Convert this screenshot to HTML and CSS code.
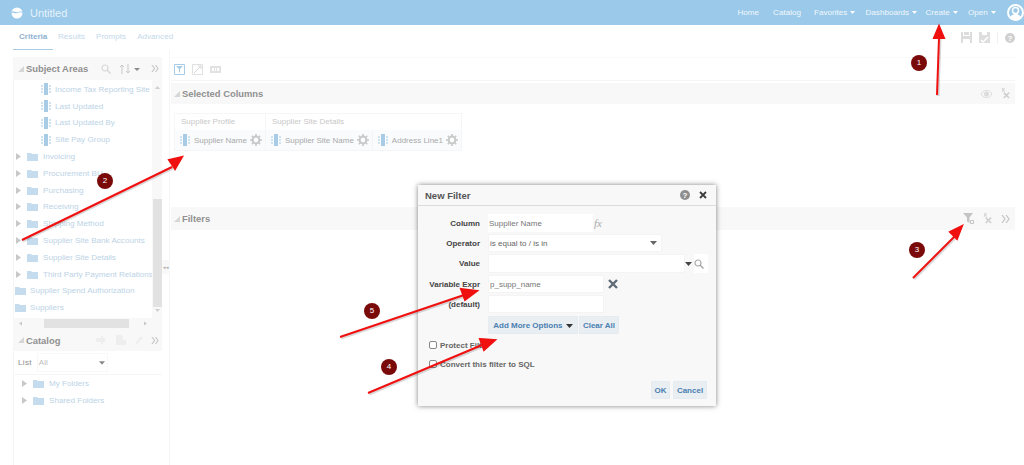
FILE: index.html
```html
<!DOCTYPE html>
<html lang="en">
<head>
    <meta charset="UTF-8">
    <title>Untitled</title>
    <link rel="stylesheet" href="styles.css">
</head>
<body>
<svg class="defs" width="0" height="0">
    <symbol id="folder" viewBox="0 0 11 9"><path d="M0 1h4l1 1h6v7H0z" fill="#c4dcee"/></symbol>
    <symbol id="field" viewBox="0 0 10 12"><path d="M3 0h4v12H3z" fill="#a8cbe6"/><path d="M0 2h2v2H0zM0 5h2v2H0zM0 8h2v2H0zM8 2h2v2H8zM8 5h2v2H8zM8 8h2v2H8z" fill="#cfe2f0"/></symbol>
    <symbol id="gear" viewBox="0 0 12 12"><circle cx="6" cy="6" r="3.400" fill="none" stroke="#c8c8c8" stroke-width="2"/><path d="M6 0v2M6 10v2M0 6h2M10 6h2M1.800 1.800l1.400 1.400M8.800 8.800l1.400 1.400M1.800 10.200l1.400-1.400M8.800 3.200l1.400-1.400" stroke="#c8c8c8" stroke-width="1.600"/></symbol>
    <symbol id="caret" viewBox="0 0 5 7"><path d="M0 0l5 3.500L0 7z" fill="#c8c8c8"/></symbol>
    <symbol id="down" viewBox="0 0 7 4"><path d="M0 0h7L3.500 4z" fill="currentColor"/></symbol>
    <symbol id="chevrons" viewBox="0 0 9 8"><path d="M1 0l3 4-3 4M5 0l3 4-3 4" fill="none" stroke="#c4c4c4" stroke-width="1.200"/></symbol>
    <symbol id="corner" viewBox="0 0 6 6"><path d="M6 0v6H0z" fill="#d6d6d6"/></symbol>
    <symbol id="clearx" viewBox="0 0 10 12"><path d="M1 0l3 4M4 0L1 4" stroke="#d4d4d4" stroke-width="1.200"/><path d="M3 5l6 6M9 5l-6 6" stroke="#cfcfcf" stroke-width="1.800"/></symbol>
    <symbol id="filter" viewBox="0 0 11 11"><path d="M0 0h10L6.500 4.500V10L4 8.500v-4z" fill="#c4c4c4"/><path d="M7.500 7.500h3v3h-3z" fill="none" stroke="#c4c4c4"/></symbol>
    <symbol id="disk" viewBox="0 0 11 11"><path d="M0 0h11v11H0z" fill="#dcdcdc"/><path d="M2 0h1v3h5V0h1v4H2zM2 7h7v4H2z" fill="#fff"/></symbol>
    <symbol id="diskcheck" viewBox="0 0 11 11"><path d="M0 0h11v11H0z" fill="#dedede"/><path d="M3 0h5v3H3z" fill="#fff"/><path d="M2 8l2 2 5-5" fill="none" stroke="#fff" stroke-width="1.500"/></symbol>
</svg>

<header class="topbar">
    <svg class="logo" width="12" height="12" viewBox="0 0 12 12"><circle cx="6" cy="6" r="5.500" fill="#fff"/><path d="M.3 6.500C2 4.500 3.500 7 6 6.300s3.500-1.800 5.700.2L11.700 5 11 4.800C9 3.800 8 5 6 5.300S2.500 3.500 1 4.800z" fill="#9ac9e9"/></svg>
    <span class="doc-title">Untitled</span>
    <nav class="topnav">
        <a class="nav-home">Home</a>
        <a class="nav-catalog">Catalog</a>
        <a>Favorites <svg width="5" height="3"><use href="#down"/></svg></a>
        <a class="nav-dash">Dashboards <svg width="5" height="3"><use href="#down"/></svg></a>
        <a>Create <svg width="5" height="3"><use href="#down"/></svg></a>
        <a>Open <svg width="5" height="3"><use href="#down"/></svg></a>
    </nav>
    <svg class="avatar" width="17" height="17" viewBox="0 0 17 17"><circle cx="8.500" cy="8.500" r="7.500" fill="#9ac9e9" stroke="#fff" stroke-width="2"/><circle cx="8.500" cy="6.500" r="3" fill="none" stroke="#fff" stroke-width="1.500"/><path d="M3 14c1-3 3-4 5.500-4s4.500 1 5.500 4l-2.500 2h-6z" fill="#fff"/></svg>
</header>

<div class="tabbar">
    <a class="tab active">Criteria</a>
    <a class="tab">Results</a>
    <a class="tab">Prompts</a>
    <a class="tab">Advanced</a>
    <div class="tab-tools">
        <svg width="11" height="11"><use href="#disk"/></svg>
        <svg width="11" height="11"><use href="#diskcheck"/></svg>
        <span class="tool-sep"></span>
        <svg width="10" height="10" viewBox="0 0 10 10"><circle cx="5" cy="5" r="5" fill="#d0d0d0"/><text x="5" y="8" class="help-mark">?</text></svg>
    </div>
</div>

<div class="workspace">
    <aside class="sidebar">
        <div class="panel-head subject-head">
            <svg class="twist" width="6" height="6"><use href="#corner"/></svg>
            <h3>Subject Areas</h3>
            <svg class="head-search" width="10" height="10" viewBox="0 0 10 10"><circle cx="4" cy="4" r="3" fill="none" stroke="#d6d6d6" stroke-width="1.200"/><path d="M6 6l3.500 3.500" stroke="#d6d6d6" stroke-width="1.500"/></svg>
            <svg class="head-sort" width="21" height="10" viewBox="0 0 21 10"><path d="M3 10V1M1 3l2-2 2 2M9 0v9M7 7l2 2 2-2" fill="none" stroke="#c8c8c8"/><path d="M15 4h6l-3 3z" fill="#8c8c8c"/></svg>
            <svg class="head-more" width="8" height="7"><use href="#chevrons"/></svg>
        </div>
        <div class="tree-wrap">
            <ul class="tree">
                <li class="row field"><svg width="10" height="12"><use href="#field"/></svg>Income Tax Reporting Site</li>
                <li class="row field"><svg width="10" height="12"><use href="#field"/></svg>Last Updated</li>
                <li class="row field"><svg width="10" height="12"><use href="#field"/></svg>Last Updated By</li>
                <li class="row field"><svg width="10" height="12"><use href="#field"/></svg>Site Pay Group</li>
                <li class="row"><svg class="cr" width="5" height="7"><use href="#caret"/></svg><svg width="11" height="9"><use href="#folder"/></svg>Invoicing</li>
                <li class="row"><svg class="cr" width="5" height="7"><use href="#caret"/></svg><svg width="11" height="9"><use href="#folder"/></svg>Procurement BU</li>
                <li class="row"><svg class="cr" width="5" height="7"><use href="#caret"/></svg><svg width="11" height="9"><use href="#folder"/></svg>Purchasing</li>
                <li class="row"><svg class="cr" width="5" height="7"><use href="#caret"/></svg><svg width="11" height="9"><use href="#folder"/></svg>Receiving</li>
                <li class="row"><svg class="cr" width="5" height="7"><use href="#caret"/></svg><svg width="11" height="9"><use href="#folder"/></svg>Shipping Method</li>
                <li class="row"><svg class="cr" width="5" height="7"><use href="#caret"/></svg><svg width="11" height="9"><use href="#folder"/></svg>Supplier Site Bank Accounts</li>
                <li class="row"><svg class="cr" width="5" height="7"><use href="#caret"/></svg><svg width="11" height="9"><use href="#folder"/></svg>Supplier Site Details</li>
                <li class="row"><svg class="cr" width="5" height="7"><use href="#caret"/></svg><svg width="11" height="9"><use href="#folder"/></svg>Third Party Payment Relations</li>
                <li class="row top"><svg width="11" height="9"><use href="#folder"/></svg>Supplier Spend Authorization</li>
                <li class="row top"><svg width="11" height="9"><use href="#folder"/></svg>Suppliers</li>
            </ul>
            <div class="vscroll">
                <svg class="arrow-up" width="5" height="3"><use href="#down"/></svg>
                <div class="vthumb"></div>
                <svg width="5" height="3"><use href="#down"/></svg>
            </div>
        </div>
        <div class="hscroll">
            <svg width="3" height="5"><use href="#caret"/></svg>
            <div class="hthumb"></div>
            <svg width="3" height="5"><use href="#caret"/></svg>
        </div>
        <div class="panel-head catalog-head">
            <svg class="twist" width="6" height="6"><use href="#corner"/></svg>
            <h3>Catalog</h3>
            <svg class="cat-tools" width="48" height="10" viewBox="0 0 48 10"><path d="M0 3h5V0l5 5-5 5V7H0z" fill="#eee"/><path d="M20 0h5l2 2v3h3v5H20z" fill="#eee"/><path d="M39 10l1-3 5-6 2 2-6 6z" fill="#eee"/></svg>
            <svg class="head-more" width="8" height="7"><use href="#chevrons"/></svg>
        </div>
        <div class="list-row">
            <span class="list-label">List</span>
            <div class="list-select">All<svg width="6" height="4"><use href="#down"/></svg></div>
        </div>
        <ul class="tree catalog-tree">
            <li class="row"><svg class="cr" width="5" height="7"><use href="#caret"/></svg><svg width="11" height="9"><use href="#folder"/></svg>My Folders</li>
            <li class="row"><svg class="cr" width="5" height="7"><use href="#caret"/></svg><svg width="11" height="9"><use href="#folder"/></svg>Shared Folders</li>
        </ul>
    </aside>

    <div class="splitter"><span>◂◂</span></div>

    <main class="content">
        <div class="toolbar">
            <svg width="11" height="11" viewBox="0 0 11 11"><path d="M.5.500h10v10H.5z" fill="none" stroke="#a8cbe6"/><path d="M2 2h7L6 5v4L5 8V5z" fill="#a8cbe6"/></svg>
            <svg width="11" height="11" viewBox="0 0 11 11"><path d="M.5.500h10v10H.5z" fill="none" stroke="#e0e0e0"/><path d="M2 9l7-7M6 2h3v3" fill="none" stroke="#d6d6d6"/></svg>
            <svg width="11" height="7" viewBox="0 0 11 7"><path d="M0 0h11v7H0z" fill="#e2e2e2"/><path d="M2 2h2v3H2zM5 2h1v3H5zM7 2h2v3H7z" fill="#fff"/></svg>
        </div>
        <section class="section selected">
            <div class="section-head">
                <svg class="twist" width="6" height="6"><use href="#corner"/></svg>
                <h3>Selected Columns</h3>
                <div class="section-tools">
                    <svg width="11" height="8" viewBox="0 0 11 8"><ellipse cx="5.500" cy="4" rx="5" ry="3.500" fill="none" stroke="#dcdcdc"/><circle cx="5.500" cy="4" r="2.500" fill="#dcdcdc"/></svg>
                    <svg width="9" height="11"><use href="#clearx"/></svg>
                </div>
            </div>
            <div class="columns">
                <div class="col-group">
                    <div class="col-title">Supplier Profile</div>
                    <div class="col-cells">
                        <div class="col-cell"><svg width="10" height="12"><use href="#field"/></svg>Supplier Name<svg width="12" height="12"><use href="#gear"/></svg></div>
                    </div>
                </div>
                <div class="col-group">
                    <div class="col-title">Supplier Site Details</div>
                    <div class="col-cells">
                        <div class="col-cell"><svg width="10" height="12"><use href="#field"/></svg>Supplier Site Name<svg width="12" height="12"><use href="#gear"/></svg></div>
                        <div class="col-cell"><svg width="10" height="12"><use href="#field"/></svg>Address Line1<svg width="12" height="12"><use href="#gear"/></svg></div>
                    </div>
                </div>
            </div>
        </section>
        <section class="section filters">
            <div class="section-head">
                <svg class="twist" width="6" height="6"><use href="#corner"/></svg>
                <h3>Filters</h3>
                <div class="section-tools">
                    <svg width="11" height="11"><use href="#filter"/></svg>
                    <svg width="9" height="11"><use href="#clearx"/></svg>
                    <svg width="9" height="8"><use href="#chevrons"/></svg>
                </div>
            </div>
        </section>
    </main>
</div>

<div class="dialog">
    <div class="dialog-head">
        <h2>New Filter</h2>
        <svg width="10" height="10" viewBox="0 0 10 10"><circle cx="5" cy="5" r="5" fill="#8e8e8e"/><text x="5" y="8" class="help-mark">?</text></svg>
        <svg class="close" width="8" height="8" viewBox="0 0 8 8"><path d="M1 1l6 6M7 1L1 7" stroke="#3c3c3c" stroke-width="1.800"/></svg>
    </div>
    <div class="filter-form">
        <label>Column</label>
        <div class="value-line">
            <div class="input plain w-col">Supplier Name</div>
            <i class="fx">fx</i>
        </div>
        <label>Operator</label>
        <div class="input w-op">is equal to / is in<svg width="7" height="4"><use href="#down"/></svg></div>
        <label>Value</label>
        <div class="value-line">
            <div class="input w-val"></div>
            <svg class="val-down" width="7" height="4"><use href="#down"/></svg>
            <div class="val-search"><svg width="10" height="10" viewBox="0 0 10 10"><circle cx="4" cy="4" r="3" fill="none" stroke="#a8a8a8" stroke-width="1.200"/><path d="M6 6l3.500 3.500" stroke="#a8a8a8" stroke-width="1.500"/></svg></div>
        </div>
        <label>Variable Expr</label>
        <div class="value-line">
            <div class="input w-var">p_supp_name</div>
            <svg class="remove" width="10" height="10" viewBox="0 0 10 10"><path d="M1 1l8 8M9 1L1 9" stroke="#5f6b75" stroke-width="2.400"/></svg>
        </div>
        <label class="light">(default)</label>
        <div class="input w-var"></div>
        <span></span>
        <div class="form-btns">
            <button class="btn">Add More Options <svg width="7" height="4"><use href="#down"/></svg></button>
            <button class="btn">Clear All</button>
        </div>
    </div>
    <div class="checks">
        <div class="check"><span class="box"></span>Protect Filter</div>
        <div class="check"><span class="box"></span>Convert this filter to SQL</div>
    </div>
    <div class="dialog-foot">
        <button class="btn btn-ok">OK</button>
        <button class="btn btn-cancel">Cancel</button>
    </div>
</div>

<svg class="marks" width="1024" height="465" viewBox="0 0 1024 465">
    <g class="shadow">
        <path d="M937 95L939 38"/><path d="M22 240L172 167"/><path d="M913 278L955 236"/><path d="M368 393L482 345"/><path d="M340 337L464 295"/>
    </g>
    <g stroke="#f01010" stroke-width="2" fill="#f01010">
        <path d="M937 95L939 38"/><path d="M934 38L939 26l5 12z"/>
        <path d="M22 240L172 167"/><path d="M169 160l13-3-7 12z"/>
        <path d="M913 278L955 236"/><path d="M950 232l12-6-5 13z"/>
        <path d="M368 393L482 345"/><path d="M480 339l15 1-11 10z"/>
        <path d="M340 337L464 295"/><path d="M461 289l16 2-12 9z"/>
    </g>
</svg>
<span class="badge b1">1</span>
<span class="badge b2">2</span>
<span class="badge b3">3</span>
<span class="badge b4">4</span>
<span class="badge b5">5</span>
</body>
</html>
```

FILE: styles.css
```css
* {
    margin: 0;
    padding: 0;
    box-sizing: border-box;
    font-family: "Liberation Sans", Arial, sans-serif;
}
body {
    width: 1024px;
    height: 465px;
    overflow: hidden;
    position: relative;
    background: #fff;
    font-size: 8.1px;
}
ul {
    list-style: none;
}
svg {
    flex-shrink: 0;
}
.defs {
    position: absolute;
}

/* top bar */
.topbar {
    height: 25px;
    background: #9ac9e9;
    display: flex;
    align-items: center;
    padding-left: 11px;
    color: #f2f8fc;
}
.doc-title {
    font-size: 11px;
    margin-left: 7px;
    color: #e6f2fa;
}
.topnav {
    margin-left: auto;
    display: flex;
    gap: 10px;
}
.nav-home {
    margin-right: 4px;
}
.nav-catalog {
    margin-right: 3px;
}
.nav-dash {
    margin-right: -2px;
}
.topnav a svg {
    color: #fff;
    margin-left: 1px;
    vertical-align: 1px;
}
.avatar {
    margin-left: 11px;
}

/* tabs */
.tabbar {
    height: 25px;
    display: flex;
    align-items: center;
    padding-left: 13px;
}
.tab {
    color: #c4d9ea;
    padding: 0 5px;
    margin-right: 1px;
    line-height: 24px;
    height: 25px;
}
.tab.active {
    color: #8fb2cf;
    font-weight: bold;
    padding: 0 6px;
    width: 40px;
    margin-right: 0;
    border-bottom: 1px solid #a8cbe6;
}
.tab-tools {
    margin-left: auto;
    margin-right: 9px;
    display: flex;
    align-items: center;
    gap: 7px;
}
.tool-sep {
    width: 1px;
    height: 12px;
    background: #f0f0f0;
}
.help-mark {
    font-size: 8px;
    font-weight: bold;
    fill: #fff;
    text-anchor: middle;
}

/* main layout */
.workspace {
    display: flex;
    height: 415px;
    padding-left: 13px;
}
.sidebar {
    width: 149px;
    margin-top: 7px;
    border-left: 1px solid #f6f6f6;
}
.panel-head {
    display: flex;
    align-items: center;
    background: #f8f8f8;
    padding-left: 4px;
}
.panel-head h3 {
    font-size: 9.4px;
    color: #909090;
    margin-left: 2px;
}
.subject-head {
    height: 23px;
}
.catalog-head {
    height: 22px;
}
.head-search {
    margin-left: 13px;
}
.head-sort {
    margin-left: 8px;
}
.head-more {
    margin-left: auto;
    margin-right: 3px;
}
.cat-tools {
    margin-left: 36px;
}

/* tree */
.tree-wrap {
    display: flex;
    height: 238px;
    overflow: hidden;
}
.tree {
    flex: 1;
    padding-top: 1px;
    min-width: 0;
    overflow: hidden;
}
.row {
    height: 16.8px;
    display: flex;
    align-items: center;
    color: #bcd3e6;
    white-space: nowrap;
    padding-left: 2px;
}
.row .cr {
    margin-right: 6px;
}
.row svg:not(.cr) {
    margin-right: 5px;
}
.row.field {
    padding-left: 27px;
}
.row.field svg {
    margin-right: 4px;
}
.row.top {
    padding-left: 1px;
}
.row.top svg:not(.cr) {
    margin-right: 4px;
}
.vscroll {
    width: 10px;
    flex-shrink: 0;
    display: flex;
    flex-direction: column;
    align-items: center;
    color: #cfcfcf;
    background: #f8f8f8;
    padding-top: 6px;
}
.arrow-up {
    transform: rotate(180deg);
}
.vthumb {
    width: 9px;
    height: 108px;
    margin: 110px 0 2px;
    background: #e2e2e2;
}
.hscroll {
    height: 11px;
    background: #f8f8f8;
    padding: 0 15px 0 5px;
    display: flex;
    align-items: center;
    justify-content: space-between;
}
.hscroll svg:first-child {
    transform: rotate(180deg);
}
.hthumb {
    width: 85px;
    height: 9px;
    margin-left: 7px;
    background: #e2e2e2;
}
.list-row {
    height: 24px;
    display: flex;
    align-items: center;
    padding-left: 4px;
    border-bottom: 1px solid #f6f6f6;
}
.list-label {
    color: #8c8c8c;
    font-size: 8.1px;
    letter-spacing: 0.3px;
}
.list-select {
    width: 71px;
    height: 19px;
    margin-left: 5px;
    padding: 0 2px 0 1px;
    border: 1px solid #f8f8f8;
    color: #c0c0c0;
    display: flex;
    align-items: center;
    justify-content: space-between;
}
.list-select svg {
    color: #888;
}
.catalog-tree .row {
    padding-left: 8px;
}
.catalog-tree {
    padding-top: 0;
}

.splitter {
    width: 8px;
    border-right: 1px solid #f6f6f6;
}
.splitter span {
    display: block;
    width: 8px;
    height: 14px;
    margin-top: 210px;
    background: #f8f8f8;
    color: #aaa;
    font-size: 5px;
    line-height: 14px;
    text-align: center;
}

/* criteria side */
.content {
    width: 844px;
    margin-top: 7px;
    margin-left: 1px;
}
.toolbar {
    height: 24px;
    display: flex;
    align-items: center;
    gap: 7px;
    padding-left: 3px;
    border-bottom: 1px solid #f6f6f6;
    border-top: 1px solid #fafafa;
}
.section-head {
    height: 21px;
    display: flex;
    align-items: center;
    background: #f8f8f8;
    padding-left: 3px;
}
.section-head h3 {
    font-size: 9.4px;
    color: #909090;
    margin-left: 2px;
}
.section-tools {
    margin-left: auto;
    margin-right: 5px;
    display: flex;
    align-items: center;
    gap: 9px;
}
.selected {
    height: 124px;
    margin-top: 2px;
}
.filters .section-head {
    height: 23px;
}
.columns {
    display: flex;
    margin: 9px 0 0 3px;
}
.col-group {
    border: 1px solid #f6f6f6;
    border-right: 0;
}
.col-group:last-child {
    border-right: 1px solid #f6f6f6;
}
.col-title {
    height: 16px;
    line-height: 16px;
    padding-left: 6px;
    color: #c8c8c8;
    font-size: 8px;
}
.col-cells {
    display: flex;
    background: #f9fbfd;
    height: 20px;
}
.col-cell {
    display: flex;
    align-items: center;
    gap: 3px;
    padding: 0 3px 0 5px;
    color: #aaa;
    font-size: 8px;
    border-right: 1px solid #f4f4f4;
}
.col-cell svg:first-child {
    margin-right: 1px;
}
.col-cell:last-child {
    border-right: 0;
}

/* dialog */
.dialog {
    position: absolute;
    left: 418px;
    top: 185px;
    width: 298px;
    height: 221px;
    background: #f8f8f8;
    box-shadow: 0 0 5px rgba(0, 0, 0, 0.5);
    display: flex;
    flex-direction: column;
    font-size: 8px;
}
.dialog-head {
    height: 21px;
    display: flex;
    align-items: center;
    padding: 0 9px 0 7px;
    border-bottom: 1px solid #dcdcdc;
}
.dialog-head h2 {
    font-size: 9.5px;
    color: #555;
    margin-right: auto;
}
.close {
    margin-left: 9px;
}
.filter-form {
    display: grid;
    grid-template-columns: 62px auto;
    column-gap: 8px;
    row-gap: 2px;
    align-items: center;
    margin-top: 8px;
}
.filter-form label {
    text-align: right;
    font-weight: bold;
    color: #444;
}
.value-line {
    display: flex;
    align-items: center;
}
.input {
    height: 18px;
    background: #fff;
    color: #777;
    padding-left: 1px;
    display: flex;
    align-items: center;
    border: 1px solid #f4f4f4;
}
.input.plain {
    border: 0;
}
.w-col {
    width: 105px;
}
.w-op {
    width: 174px;
    justify-content: space-between;
    padding-right: 4px;
    color: #666;
}
.w-val {
    width: 197px;
    height: 19px;
}
.w-var {
    width: 116px;
}
.fx {
    font-family: "Liberation Serif", serif;
    font-size: 11px;
    color: #aaa;
    margin-left: 1px;
}
.val-down {
    color: #444;
}
.val-search {
    width: 14px;
    height: 19px;
    margin-left: 2px;
    background: #fff;
    display: flex;
    align-items: center;
}
.remove {
    margin-left: 4px;
}
.form-btns {
    display: flex;
    gap: 1px;
    margin-top: 1px;
}
.btn {
    height: 18px;
    border: 1px solid #e6ebf0;
    background: #e9eef3;
    color: #4a7fb0;
    font-size: 8px;
    font-weight: bold;
    padding: 0;
    border-radius: 1px;
    white-space: nowrap;
}
.btn svg {
    color: #333;
    margin-left: 1px;
}
.form-btns .btn:first-child {
    width: 90px;
}
.form-btns .btn:last-child {
    width: 40px;
}
.btn-ok {
    width: 19px;
}
.btn-cancel {
    width: 34px;
}
.checks {
    margin: 4px 0 0 11px;
    display: flex;
    flex-direction: column;
    gap: 9px;
    padding-top: 2px;
}
.check {
    display: flex;
    align-items: center;
    gap: 3px;
    height: 10px;
    font-weight: bold;
    color: #666;
}
.box {
    width: 8px;
    height: 8px;
    border: 1px solid #888;
    border-radius: 2px;
    background: #fff;
}
.dialog-foot {
    margin-top: auto;
    padding: 0 9px 7px 0;
    display: flex;
    justify-content: flex-end;
    gap: 3px;
}

/* annotations laid over the screenshot */
.marks {
    position: absolute;
    left: 0;
    top: 0;
    pointer-events: none;
}
.shadow {
    stroke: rgba(0, 0, 0, 0.15);
    stroke-width: 3;
    transform: translate(1px, 1px);
}
.badge {
    position: absolute;
    width: 16px;
    height: 16px;
    border-radius: 50%;
    background: #7a0a0a;
    color: #fff;
    font-size: 8px;
    line-height: 16px;
    text-align: center;
}
.b1 { left: 911px; top: 55px; }
.b2 { left: 97px; top: 173px; }
.b3 { left: 909px; top: 242px; }
.b4 { left: 381px; top: 359px; }
.b5 { left: 364px; top: 303px; }
```
